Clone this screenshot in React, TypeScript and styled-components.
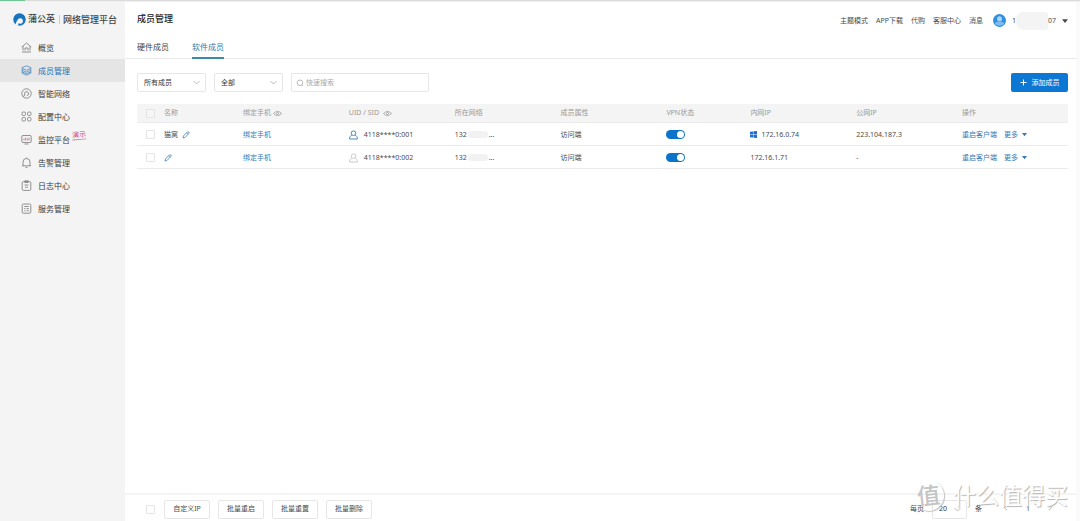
import React from 'react';
import styled, { createGlobalStyle, css } from 'styled-components';

const Global = createGlobalStyle`
  *, *::before, *::after { box-sizing: border-box; }
  body { margin: 0; background: #fff; }
  body, button, input, select {
    font-family: "Noto Sans", "Noto Sans CJK SC", sans-serif;
    font-size: 7px;
    line-height: 12px;
    color: #4a4a4a;
  }
  button { padding: 0; border: 0; background: none; cursor: pointer; }
  a { color: inherit; text-decoration: none; }
`;

const Page = styled.div`
  display: flex;
  flex-direction: column;
  min-height: 100vh;
`;
const LoadingTrack = styled.div`
  height: 2px;
  background: linear-gradient(#dcdcdc 50%, #efefef 50%);
`;
const LoadingBar = styled.div`
  width: 25px;
  height: 1px;
  background: #6fc795;
`;
const Shell = styled.div`
  display: flex;
  flex: 1;
`;
const Sidebar = styled.aside`
  flex: none;
  width: 125px;
  background: #f4f4f4;
`;
const Brand = styled.div`
  display: flex;
  align-items: center;
  height: 34px;
  padding-left: 13px;
  white-space: nowrap;
  font-weight: 500;
  color: #444;
`;
const BrandName = styled.span`
  margin-left: 2px;
  font-size: 9px;
`;
const BrandProduct = styled.span`
  margin-left: 4px;
  padding-left: 3px;
  border-left: 1px solid #ccc;
  font-size: 9px;
  line-height: 9px;
`;
const Menu = styled.nav`
  display: flex;
  flex-direction: column;
`;
const MenuItem = styled.a<{ $active?: boolean }>`
  display: flex;
  align-items: center;
  gap: 6px;
  height: 23px;
  padding-left: 21px;
  font-size: 8px;
  color: ${p => (p.$active ? '#2273b5' : '#3c3c3c')};
  background: ${p => (p.$active ? '#e5e5e5' : 'transparent')};
  svg { color: ${p => (p.$active ? '#4a86bd' : '#777')}; }
`;
const DemoTag = styled.em`
  align-self: flex-start;
  margin: 3px 0 0 -4px;
  border-bottom: 1px solid #dc7fa8;
  font-size: 7px;
  font-style: normal;
  line-height: 8px;
  color: #cf4583;
  transform: rotate(-5deg);
`;
const Main = styled.main`
  display: flex;
  flex: 1;
  flex-direction: column;
  min-width: 0;
  border-right: 4px solid #fafafa;
`;
const Header = styled.header`
  display: flex;
  align-items: center;
  justify-content: space-between;
  height: 34px;
  padding: 0 8px 0 12px;
`;
const Title = styled.h1`
  margin: 0;
  font-size: 9px;
  font-weight: 500;
  color: #222;
`;
const Tools = styled.div`
  display: flex;
  align-items: center;
  gap: 8px;
  padding-top: 3px;
`;
const Account = styled.button`
  display: flex;
  align-items: center;
  gap: 6px;
  margin-left: 2px;
`;
const Masked = styled.span`
  display: inline-block;
  width: 32px;
  height: 18px;
  margin: -3px 0;
  border-radius: 7px 3px 3px 8px;
  background: #f4f4f4;
`;
const AccountNo = styled.span`
  display: flex;
  align-items: center;
`;
const Tabs = styled.nav`
  display: flex;
  gap: 23px;
  height: 23px;
  padding-left: 12px;
  border-bottom: 1px solid #e9e9e9;
`;
const Tab = styled.a<{ $active?: boolean }>`
  height: 23px;
  font-size: 8px;
  line-height: 22px;
  color: ${p => (p.$active ? '#2d7dad' : '#444')};
  border-bottom: 2px solid ${p => (p.$active ? '#3a8ba8' : 'transparent')};
`;
const Content = styled.section`
  flex: 1;
  padding: 14px 8px 0 12px;
`;
const Filters = styled.div`
  display: flex;
  gap: 8px;
  height: 19px;
  margin-bottom: 12px;
`;
const field = css`
  border: 1px solid #e6e6e6;
  border-radius: 2px;
  background: #fff;
`;
const SelectBox = styled.label<{ $narrow?: boolean }>`
  ${field}
  display: flex;
  align-items: center;
  width: ${p => (p.$narrow ? 35 : 69)}px;
  height: 19px;
  padding: 0 5px 0 6px;
  select {
    flex: 1;
    min-width: 0;
    padding: 0;
    border: 0;
    appearance: none;
    background: none;
    color: #333;
  }
`;
const SearchBox = styled.label`
  ${field}
  display: flex;
  align-items: center;
  gap: 2px;
  width: 138px;
  padding: 0 4px;
  color: #aaa;
  input {
    flex: 1;
    min-width: 0;
    padding: 0;
    border: 0;
    outline: 0;
    background: none;
  }
  input::placeholder { color: #aaa; }
`;
const PrimaryButton = styled.button`
  display: flex;
  align-items: center;
  justify-content: center;
  gap: 5px;
  width: 57px;
  height: 19px;
  margin-left: auto;
  border-radius: 2px;
  background: #0c78d3;
  color: #fff;
`;
const Table = styled.table`
  width: 100%;
  table-layout: fixed;
  border-collapse: separate;
  border-spacing: 0;
  th, td {
    padding: 0;
    text-align: left;
    font-weight: 400;
    white-space: nowrap;
    border-bottom: 1px solid #ebebeb;
  }
  th { height: 19px; background: #f4f4f4; color: #999; }
  td { height: 23px; padding-top: 1px; }
`;
const Col = styled.col<{ $w?: number }>`
  width: ${p => (p.$w ? `${p.$w}px` : 'auto')};
`;
const Cell = styled.span<{ $gap?: number }>`
  display: flex;
  align-items: center;
  gap: ${p => p.$gap ?? 4}px;
`;
const Check = styled.input`
  display: block;
  width: 9px;
  height: 9px;
  margin: 0;
  border: 1px solid #e4e4e4;
  border-radius: 1px;
  background: #fff;
  appearance: none;
  &:checked { background: #0c78d3; }
  th &, td & { margin-left: 9px; }
  th & { background: #f6f6f6; }
`;
const BlueLink = styled.a`
  color: #3478b4;
`;
const BlueButton = styled.button`
  display: flex;
  align-items: center;
  gap: 4px;
  color: #3478b4;
`;
const Smudge = styled.span`
  width: 20px;
  height: 7px;
  border-radius: 3px;
  background: #f2f2f2;
`;
const Switch = styled.input`
  display: flex;
  align-items: center;
  width: 19px;
  height: 9px;
  margin: 0;
  padding: 0 1px;
  border-radius: 5px;
  background: #ccc;
  appearance: none;
  &::before {
    content: '';
    width: 7px;
    height: 7px;
    border-radius: 50%;
    background: #fff;
  }
  &:checked { justify-content: flex-end; background: #0b73ca; }
`;
const Footer = styled.footer`
  position: relative;
  display: flex;
  align-items: center;
  justify-content: space-between;
  height: 28px;
  padding: 2px 8px 0 21px;
  border-top: 2px solid #f4f4f4;
`;
const Bulk = styled.div`
  display: flex;
  align-items: center;
  gap: 8px;
`;
const BulkButton = styled.button`
  ${field}
  width: 46px;
  height: 19px;
  &:first-of-type { margin-left: 1px; }
`;
const Pager = styled.div`
  display: flex;
  align-items: center;
  gap: 8px;
  padding-right: 14px;
`;
const PagerNav = styled.div`
  display: flex;
  align-items: center;
  gap: 17px;
  margin-left: 12px;
`;
const Watermark = styled.div`
  position: absolute;
  right: 8px;
  bottom: 10px;
  display: flex;
  align-items: center;
  gap: 9px;
  font-size: 23px;
  line-height: 31px;
  color: #fff;
  text-shadow: 1px 1px 1px #b4b4b4;
  pointer-events: none;
`;
const WatermarkSeal = styled.span`
  width: 31px;
  height: 31px;
  border-radius: 50%;
  font-weight: 500;
  text-align: center;
  color: #c4c4c4;
  text-shadow: none;
  box-shadow: 1px 1px 1px #c4c4c4;
  transform: rotate(-6deg);
`;

const menuIcons: Record<string, React.ReactNode> = {
  home: <path d="M.8 5 5.500 1l4.700 4M2 4.300V8.500M9 4.300V8.500M1 10h9M4 8.500V6h3v2.500" />,
  members: <><path d="M5.500.8 9.800 2.600v5.600L5.500 10.200 1.200 8.200V2.600Z" /><path d="M1.200 3.500 5.500 5.200l4.300-1.700M1.200 5.400l4.300 1.700 4.300-1.700M1.200 7l4.300 1.700L9.800 7" /></>,
  network: <><circle cx="5.5" cy="5.5" r="4.700" /><path d="M1.800 8C3.200 8.600 3.900 7.800 3.700 6.200A2 2 0 1 1 5.800 7.600" /></>,
  config: <><rect x="1" y="1" width="3.5" height="3.5" rx="1.200" /><rect x="6.5" y="1" width="3.5" height="3.5" rx="1.200" /><rect x="1" y="6.5" width="3.5" height="3.5" rx="1.200" /><rect x="6.5" y="6.5" width="3.5" height="3.5" rx="1.200" /></>,
  monitor: <><rect x=".8" y="1.500" width="9.400" height="7" rx="1.200" /><path d="M3 6.500V4.500M4.700 6.500V3.500M6.400 6.500V4.500M8 6.500v-3" stroke="#c0608e" /><path d="M3.500 10h4" /></>,
  bell: <path d="M1 8.800h9M2 8.800V5a3.500 3.500 0 0 1 7 0v3.800M4.500 10.400h2M5.500 1.500V.5" />,
  log: <><rect x="1.2" y="1.6" width="8.600" height="8.800" rx="1.200" /><path d="M3.800.8h3.400v1.700H3.800zM3.500 5h4M4 7.200h3" /></>,
  service: <><rect x="1.2" y="1" width="8.600" height="9.200" rx="1.200" /><path d="M3.200 3.500h4.600M3.200 5.600h1.200M5.500 5.600h2.300M3.200 7.700h1.200M5.500 7.700h2.300" /></>,
};
const MenuIcon = ({ name }: { name: string }) => (
  <svg width="11" height="11" viewBox="0 0 11 11" fill="none" stroke="currentColor" strokeWidth=".8">{menuIcons[name]}</svg>
);
const Logo = () => (
  <svg width="13" height="13" viewBox="0 0 13 13">
    <circle cx="6.5" cy="6.5" r="6.200" fill="#1a73bd" />
    <circle cx="7.200" cy="8" r="2.700" fill="#f4f4f4" />
    <path d="M4.600 7.200C3.400 8.600 2.600 10.200 2.400 12.200L5.400 13C5 11.600 5.200 10.600 6 9.800Z" fill="#f4f4f4" />
  </svg>
);
const Chevron = ({ dir = 'down' }: { dir?: 'down' | 'left' | 'right' }) => (
  <svg width="7" height="7" viewBox="0 0 7 7" fill="none" stroke="#aaa" strokeWidth=".8">
    <path d={{ down: 'M.5 2l3 3 3-3', left: 'M5 .8 2.200 3.500 5 6.200', right: 'M2 .8l2.800 2.700L2 6.200' }[dir]} />
  </svg>
);
const Caret = ({ size = 5 }: { size?: number }) => (
  <svg width={size} height={size} viewBox="0 0 5 5" fill="currentColor"><path d="M0 1h5L2.500 4.200Z" /></svg>
);
const Eye = () => (
  <svg width="9" height="7" viewBox="0 0 9 7" fill="none" stroke="#999" strokeWidth=".8">
    <path d="M.5 3.500Q4.500-.6 8.500 3.500 4.500 7.600.5 3.500Z" /><circle cx="4.500" cy="3.500" r="1" />
  </svg>
);
const Pencil = () => (
  <svg width="8" height="8" viewBox="0 0 8 8" fill="none" stroke="#4483b8" strokeWidth=".8">
    <path d="M1 7l.4-2L5.300 1a1 1 0 0 1 1.500 1.500L2.900 6.600ZM4.600 1.800l1.500 1.500" />
  </svg>
);
const User = ({ online }: { online: boolean }) => (
  <svg width="9" height="10" viewBox="0 0 9 10" fill="none" stroke={online ? '#3b80b6' : '#c4c4c4'} strokeWidth=".9">
    <circle cx="4.500" cy="3.200" r="2.300" /><path d="M2.800 5.200C1.300 5.800.6 7 .6 9h7.800c0-2-.7-3.200-2.200-3.800" />
  </svg>
);
const Windows = () => (
  <svg width="7" height="7" viewBox="0 0 7 7" fill="#1c6fd0"><path d="M0 .8 3.200.4v2.900H0ZM3.600.3 7 0v3.300H3.600ZM0 3.700h3.200v2.900L0 6.200ZM3.600 3.700H7V7l-3.400-.3Z" /></svg>
);
const Avatar = () => (
  <svg width="13" height="13" viewBox="0 0 13 13">
    <circle cx="6.500" cy="6.500" r="6.500" fill="#2f8fe0" />
    <circle cx="6.500" cy="4.800" r="2.500" fill="#a9d5f8" />
    <path d="M1.800 9.800a5.500 5.500 0 0 1 9.400 0A6.500 6.500 0 0 1 1.800 9.800Z" fill="#7dbcf2" />
  </svg>
);
const Magnifier = () => (
  <svg width="8" height="8" viewBox="0 0 8 8" fill="none" stroke="#aaa" strokeWidth=".8"><circle cx="4" cy="3.800" r="2.800" /><path d="M6 6l1 1" /></svg>
);
const Plus = () => (
  <svg width="7" height="7" viewBox="0 0 7 7" stroke="#fff"><path d="M3.500.5v6M.5 3.500h6" /></svg>
);

const menu = [
  ['home', '概览'], ['members', '成员管理'], ['network', '智能网络'], ['config', '配置中心'],
  ['monitor', '监控平台'], ['bell', '告警管理'], ['log', '日志中心'], ['service', '服务管理'],
];
const rows = [
  { name: '猫窝', uid: '4118****0:001', online: true, net: '132', ip: '172.16.0.74', windows: true, pub: '223.104.187.3' },
  { name: '', uid: '4118****0:002', online: false, net: '132', ip: '172.16.1.71', windows: false, pub: '-' },
];

export default function App() {
  return (
    <>
      <Global />
      <Page>
        <LoadingTrack><LoadingBar /></LoadingTrack>
        <Shell>
          <Sidebar>
            <Brand><Logo /><BrandName>蒲公英</BrandName><BrandProduct>网络管理平台</BrandProduct></Brand>
            <Menu>
              {menu.map(([icon, label]) => (
                <MenuItem key={icon} href="#" $active={icon === 'members'}>
                  <MenuIcon name={icon} />{label}{icon === 'monitor' && <DemoTag>演示</DemoTag>}
                </MenuItem>
              ))}
            </Menu>
          </Sidebar>
          <Main>
            <Header>
              <Title>成员管理</Title>
              <Tools>
                <a href="#">主题模式</a><a href="#">APP下载</a><a href="#">代购</a><a href="#">客服中心</a><a href="#">消息</a>
                <Account><Avatar /><AccountNo>1<Masked />07</AccountNo><Caret size={6} /></Account>
              </Tools>
            </Header>
            <Tabs><Tab href="#">硬件成员</Tab><Tab href="#" $active>软件成员</Tab></Tabs>
            <Content>
              <Filters>
                <SelectBox><select aria-label="成员"><option>所有成员</option></select><Chevron /></SelectBox>
                <SelectBox><select aria-label="状态"><option>全部</option></select><Chevron /></SelectBox>
                <SearchBox><Magnifier /><input aria-label="搜索" placeholder="快速搜索" /></SearchBox>
                <PrimaryButton><Plus />添加成员</PrimaryButton>
              </Filters>
              <Table>
                <colgroup>
                  <Col $w={27} /><Col $w={79} /><Col /><Col /><Col /><Col /><Col $w={84} /><Col /><Col /><Col />
                </colgroup>
                <thead>
                  <tr>
                    <th><Check type="checkbox" aria-label="全选" /></th>
                    <th>名称</th>
                    <th><Cell $gap={2}>绑定手机<Eye /></Cell></th>
                    <th><Cell>UID / SID<Eye /></Cell></th>
                    <th>所在网络</th><th>成员属性</th><th>VPN状态</th><th>内网IP</th><th>公网IP</th><th>操作</th>
                  </tr>
                </thead>
                <tbody>
                  {rows.map(r => (
                    <tr key={r.uid}>
                      <td><Check type="checkbox" aria-label={r.uid} /></td>
                      <td><Cell>{r.name}<BlueButton aria-label="编辑"><Pencil /></BlueButton></Cell></td>
                      <td><BlueLink href="#">绑定手机</BlueLink></td>
                      <td><Cell $gap={6}><User online={r.online} />{r.uid}</Cell></td>
                      <td><Cell $gap={1}>{r.net}<Smudge />...</Cell></td>
                      <td>访问端</td>
                      <td><Switch type="checkbox" defaultChecked aria-label="VPN状态" /></td>
                      <td><Cell>{r.windows && <Windows />}{r.ip}</Cell></td>
                      <td>{r.pub}</td>
                      <td><Cell $gap={7}><BlueLink href="#">重启客户端</BlueLink><BlueButton>更多<Caret /></BlueButton></Cell></td>
                    </tr>
                  ))}
                </tbody>
              </Table>
            </Content>
            <Footer>
              <Bulk>
                <Check type="checkbox" aria-label="全选" />
                <BulkButton>自定义IP</BulkButton><BulkButton>批量重启</BulkButton><BulkButton>批量重置</BulkButton><BulkButton>批量删除</BulkButton>
              </Bulk>
              <Pager>
                每页
                <SelectBox $narrow><select aria-label="每页条数"><option>20</option></select><Chevron /></SelectBox>
                条
                <PagerNav>
                  <button aria-label="上一页"><Chevron dir="left" /></button>
                  <span>1</span>
                  <button aria-label="下一页"><Chevron dir="right" /></button>
                </PagerNav>
              </Pager>
              <Watermark><WatermarkSeal>值</WatermarkSeal>什么值得买</Watermark>
            </Footer>
          </Main>
        </Shell>
      </Page>
    </>
  );
}
